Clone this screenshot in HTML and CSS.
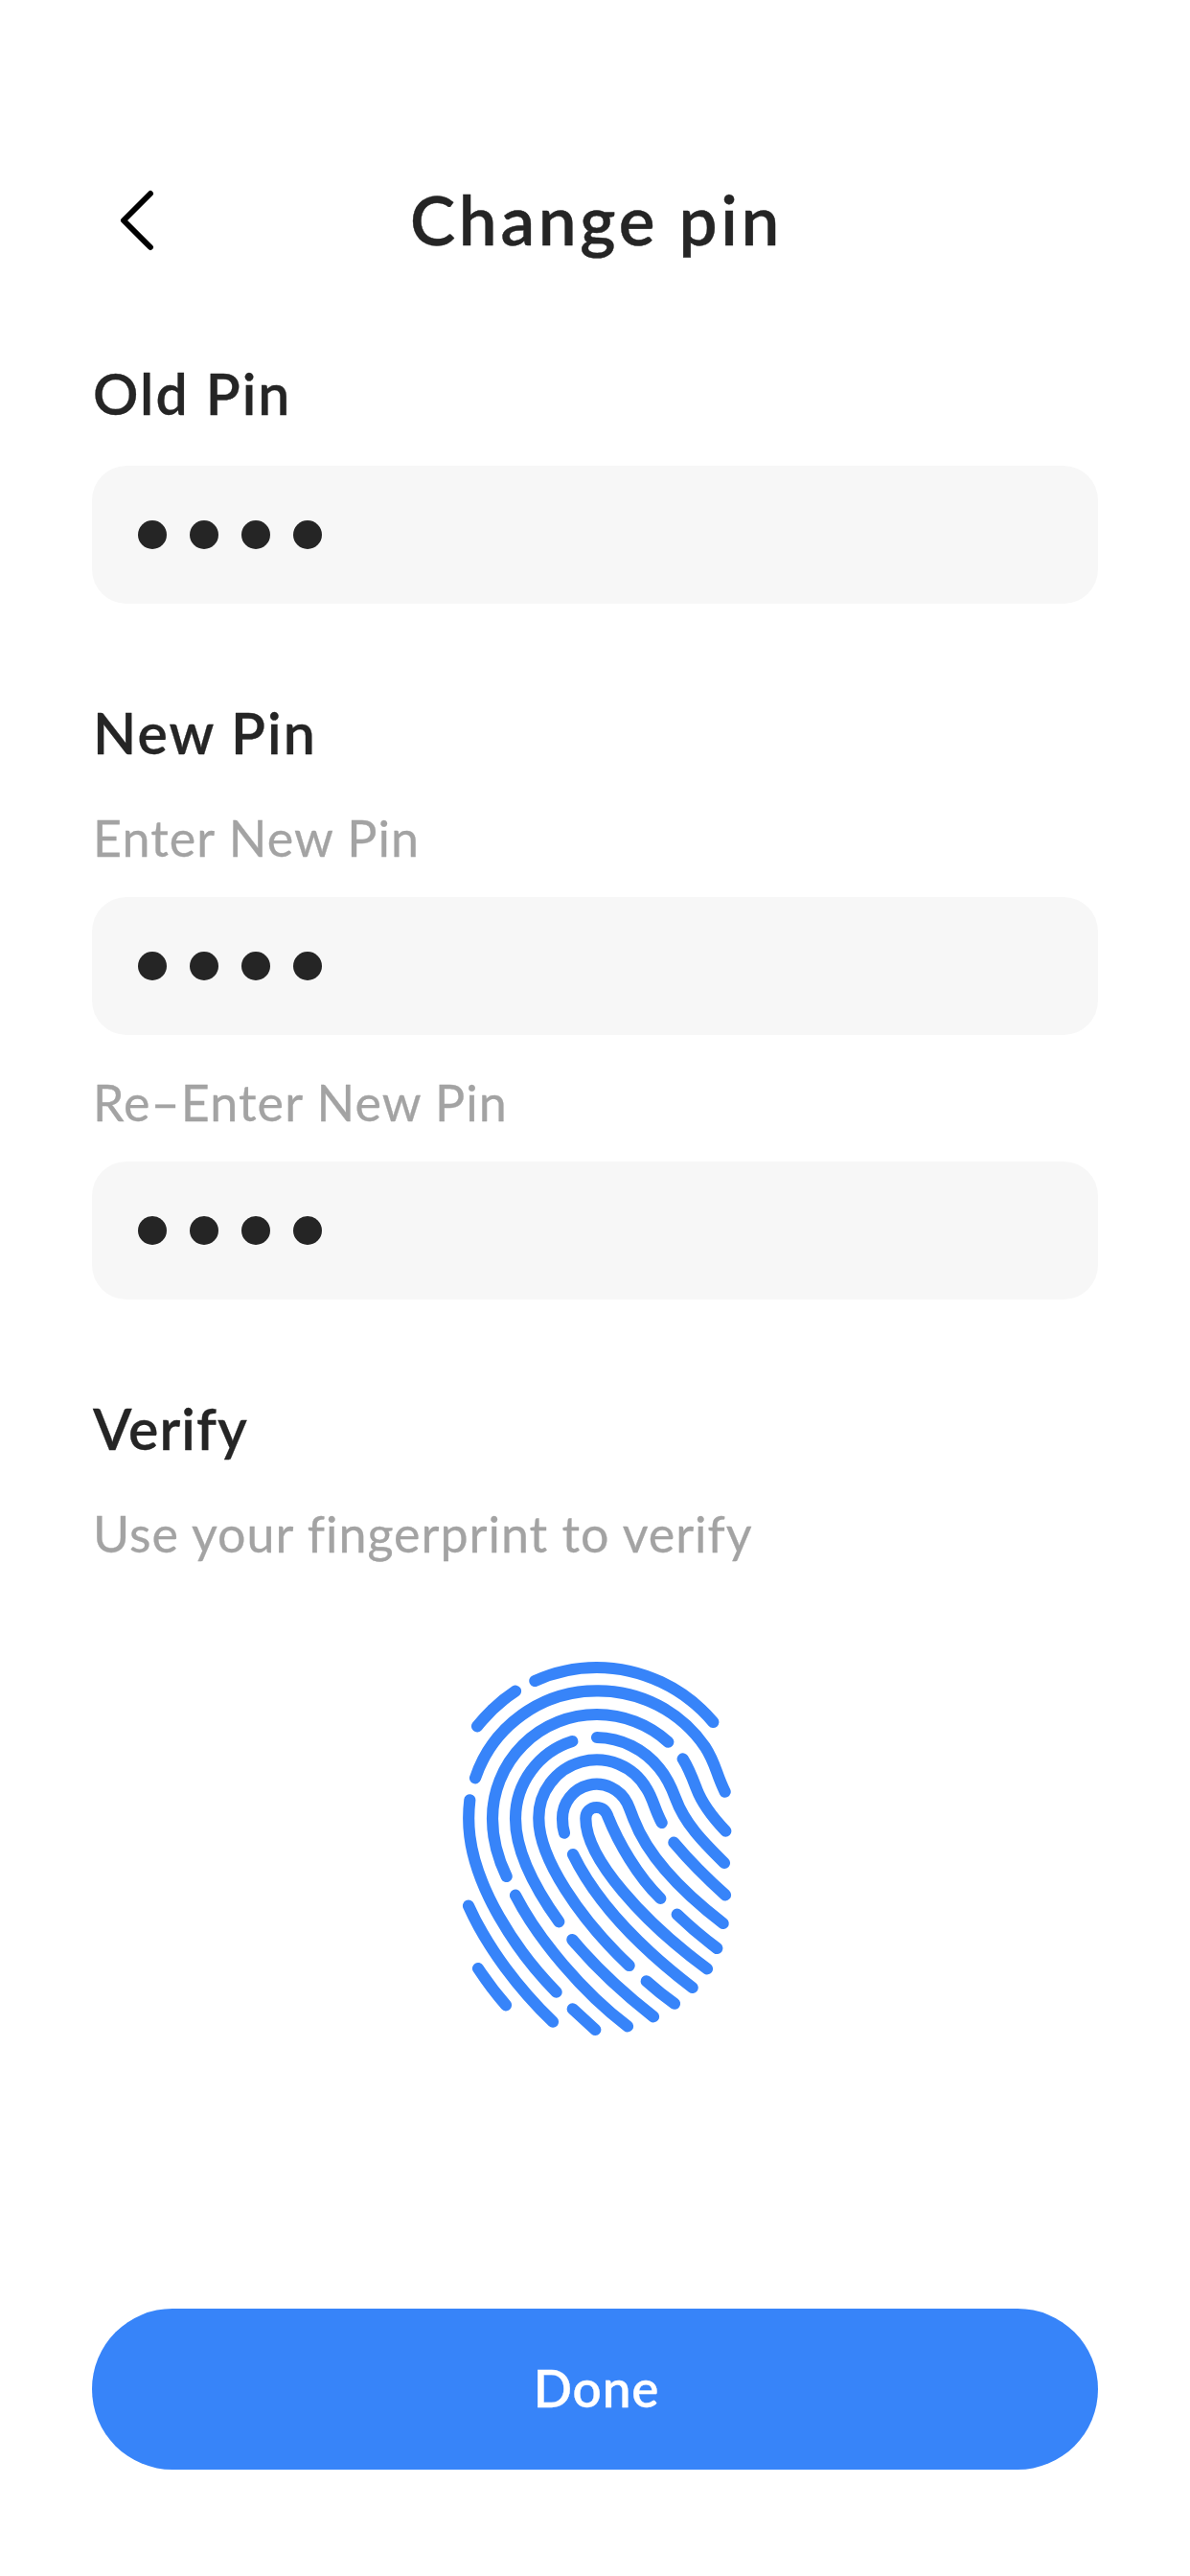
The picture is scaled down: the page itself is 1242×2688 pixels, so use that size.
FILE: index.html
```html
<!DOCTYPE html>
<html lang="en">
<head>
<meta charset="utf-8">
<title>Change pin</title>
<link rel="stylesheet" href="styles.css">
</head>
<body>
<main class="screen">
  <header class="topbar">
    <a class="back" aria-label="Back">
      <svg width="96" height="84" viewBox="0 0 96 84" fill="none" stroke="#000" stroke-width="6" stroke-linecap="round" stroke-linejoin="round"><path d="M61 15 33 43l28 28"/></svg>
    </a>
    <h1 class="title">Change pin</h1>
  </header>

  <section class="group">
    <h2 class="heading">Old Pin</h2>
    <div class="field"><i class="dot"></i><i class="dot"></i><i class="dot"></i><i class="dot"></i></div>
  </section>

  <section class="group">
    <h2 class="heading">New Pin</h2>
    <p class="hint hint-enter">Enter New Pin</p>
    <div class="field"><i class="dot"></i><i class="dot"></i><i class="dot"></i><i class="dot"></i></div>
    <p class="hint hint-reenter">Re–Enter New Pin</p>
    <div class="field"><i class="dot"></i><i class="dot"></i><i class="dot"></i><i class="dot"></i></div>
  </section>

  <section class="group">
    <h2 class="heading heading-verify">Verify</h2>
    <p class="hint hint-verify">Use your fingerprint to verify</p>
    <svg class="fingerprint" viewBox="0 0 900 1212" fill="none" stroke="#3784f9" stroke-width="36.5" stroke-linecap="round">
      <path d="M259 84A466 466 0 0 1 452 42A480 480 0 0 1 817 213"/>
      <path d="M78 226Q132 159 198 116"/>
      <path d="M72 388A401 401 0 0 1 452 115A405 405 0 0 1 792 291C826 344 825 373 854 431"/>
      <path d="M676 275A332 332 0 0 0 452 189A326 326 0 0 0 126 515C126 578 142 638 170 696"/>
      <path d="M376 273A254 254 0 0 0 198 515C198 617 254 726 334 838"/>
      <path d="M453 261A254 254 0 0 1 648 357C672 386 686 416 699 451C728 530 783 586 852 654"/>
      <path d="M722 328C741 358 752 388 765 422C783 470 816 512 856 554"/>
      <path d="M656 528C632 482 630 456 609 422A181 181 0 0 0 271 515C271 640 400 830 554 975"/>
      <path d="M351 560C346 544 345 532 345 515A107 107 0 0 1 548 467C556 484 560 497 568 517C612 632 720 745 848 843"/>
      <path d="M652 765C580 695 520 590 488 510C482 492 470 480 452 480C432 480 418 495 418 515C418 640 600 840 798 985"/>
      <path d="M378 627C450 775 590 920 752 1044"/>
      <path d="M376 894C450 982 540 1065 630 1135"/>
      <path d="M198 755C270 895 410 1060 549 1165"/>
      <path d="M377 1111 448 1176"/>
      <path d="M55 457C51 490 50 530 55 570C75 730 190 920 326 1058"/>
      <path d="M51 788C110 920 210 1050 315 1151"/>
      <path d="M81 984Q122 1046 168 1099"/>
      <path d="M694 590Q765 674 855 754"/>
      <path d="M704 815Q762 871 829 921"/>
      <path d="M608 1024Q650 1062 696 1094"/>
    </svg>
  </section>

  <button class="done"><span class="done-label">Done</span></button>
</main>
</body>
</html>
```

FILE: styles.css
```css
* { box-sizing: border-box; margin: 0; padding: 0; }

body {
  background: #fff;
  color: #252525;
  font-family: Lato, "Open Sans", sans-serif;
}

.screen {
  display: flex;
  flex-direction: column;
  width: 1242px;
  height: 2688px;
  padding: 180px 96px 111px;
}

.topbar {
  display: grid;
  grid-template-columns: 96px 1fr 96px;
  align-items: center;
  height: 96px;
}

.back svg { display: block; }

.title {
  padding: 1px 0 0 3px;
  font-size: 71px;
  font-weight: 600;
  line-height: 96px;
  text-align: center;
  white-space: nowrap;
  letter-spacing: 3.7px;
  -webkit-text-stroke: 0.4px currentColor;
}

.group {
  display: flex;
  flex-direction: column;
  padding-top: 94px;
}

.heading {
  height: 80px;
  margin-bottom: 36px;
  padding: 1px 0 0 1px;
  font-size: 59px;
  font-weight: 600;
  line-height: 80px;
  letter-spacing: 2.1px;
  -webkit-text-stroke: 0.3px currentColor;
}
.heading-verify { letter-spacing: 1.1px; }

.hint {
  height: 72px;
  margin-top: -2px;
  padding-left: 1px;
  color: #a3a3a3;
  font-size: 52px;
  font-weight: 400;
  line-height: 72px;
  letter-spacing: 1.1px;
  white-space: nowrap;
  -webkit-text-stroke: 0.3px currentColor;
}
.hint-enter { margin-bottom: 26px; }
.hint-reenter { margin: 34px 0 26px; }
.hint-verify { letter-spacing: 1px; }

.field {
  display: flex;
  align-items: center;
  gap: 24px;
  height: 144px;
  padding: 0 48px;
  border-radius: 36px;
  background: #f7f7f7;
}

.dot {
  width: 30px;
  height: 30px;
  border-radius: 50%;
  background: #252525;
}

.fingerprint {
  width: 300px;
  height: 404px;
  margin: 90px 0 0 376px;
}

.done {
  display: flex;
  align-items: center;
  justify-content: center;
  height: 168px;
  margin-top: auto;
  padding: 0 0 3px 3px;
  border: 0;
  border-radius: 84px;
  background: #3784f9;
  color: #fff;
  font-family: inherit;
}

.done-label {
  font-size: 53px;
  font-weight: 600;
  line-height: 72px;
  letter-spacing: 0.8px;
  -webkit-text-stroke: 0.3px currentColor;
}
```
